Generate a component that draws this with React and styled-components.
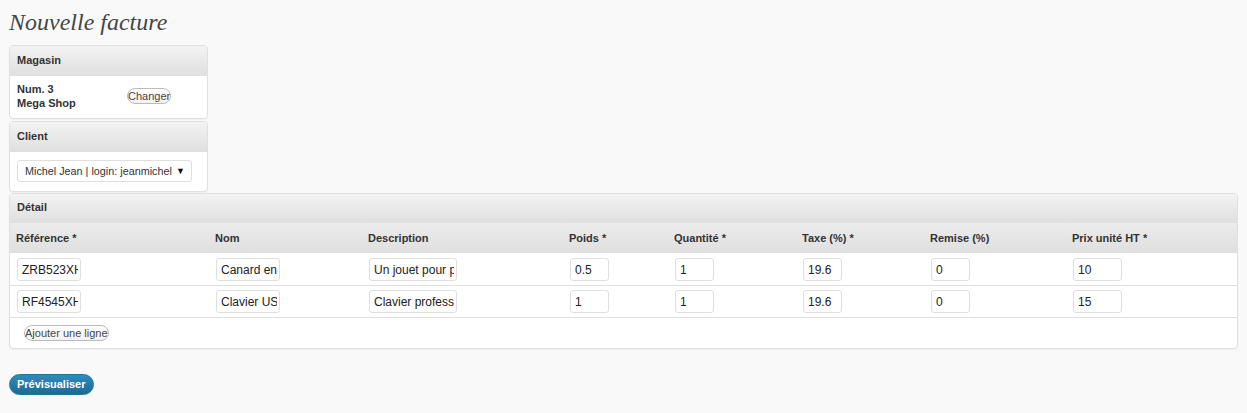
import React from 'react'
import styled, { createGlobalStyle } from 'styled-components'

const GlobalStyle = createGlobalStyle`
  body {
    margin: 0;
    background: #f9f9f9;
    font-family: "Liberation Sans", Arial, sans-serif;
    color: #333;
  }
`;

const columns = [
  { label: 'Référence *', width: 199, input: 64 },
  { label: 'Nom', width: 153, input: 64 },
  { label: 'Description', width: 201, input: 88 },
  { label: 'Poids *', width: 105, input: 39 },
  { label: 'Quantité *', width: 128, input: 39 },
  { label: 'Taxe (%) *', width: 128, input: 39 },
  { label: 'Remise (%)', width: 142, input: 39 },
  { label: 'Prix unité HT *', width: 172, input: 49 },
];

const lines = [
  ['ZRB523XH', 'Canard en plastique', 'Un jouet pour petits', '0.5', '1', '19.6', '0', '10'],
  ['RF4545XH', 'Clavier USB', 'Clavier professionnel', '1', '1', '19.6', '0', '15'],
];

export default function App() {
  return (
    <Page>
      <GlobalStyle />
      <Title>Nouvelle facture</Title>

      <Panel $width="199px">
        <PanelHead>Magasin</PanelHead>
        <ShopBody>
          <ShopName>
            Num. 3<br />
            Mega Shop
          </ShopName>
          <SmallButton>Changer</SmallButton>
        </ShopBody>
      </Panel>

      <Panel $width="199px">
        <PanelHead>Client</PanelHead>
        <ClientBody>
          <Select>
            <span>Michel Jean | login: jeanmichel</span>
            <Arrow>▼</Arrow>
          </Select>
        </ClientBody>
      </Panel>

      <Panel $tight>
        <PanelHead $height={29}>Détail</PanelHead>
        <Table>
          <colgroup>
            {columns.map((c) => (
              <col key={c.label} style={{ width: c.width }} />
            ))}
          </colgroup>
          <thead>
            <tr>
              {columns.map((c) => (
                <Th key={c.label}>{c.label}</Th>
              ))}
            </tr>
          </thead>
          <tbody>
            {lines.map((line, i) => (
              <tr key={i}>
                {line.map((v, j) => (
                  <Td key={j} $first={i === 0}>
                    <Field defaultValue={v} style={{ width: columns[j].input }} />
                  </Td>
                ))}
              </tr>
            ))}
            <tr>
              <FootCell colSpan={8}>
                <SmallButton>Ajouter une ligne</SmallButton>
              </FootCell>
            </tr>
          </tbody>
        </Table>
      </Panel>

      <PrimaryButton>Prévisualiser</PrimaryButton>
    </Page>
  )
}

const Page = styled.div`
  padding: 8px 9px 18px 9px;
  display: flex;
  flex-direction: column;
  align-items: flex-start;
  gap: 2px;
`;

const Title = styled.h2`
  margin: 0 0 6px 0;
  font-family: "Liberation Serif", Georgia, serif;
  font-style: italic;
  font-weight: normal;
  font-size: 24px;
  line-height: 29px;
  color: #464646;
`;

const Panel = styled.div`
  box-sizing: border-box;
  width: ${(p) => p.$width || '100%'};
  margin-top: ${(p) => (p.$tight ? '-1px' : '0')};
  border: 1px solid #dfdfdf;
  border-radius: 4px;
  background: #fff;
  overflow: hidden;
  box-shadow: 0 1px 1px rgba(0, 0, 0, 0.04);
`;

const PanelHead = styled.div`
  height: ${(p) => p.$height || 30}px;
  line-height: ${(p) => (p.$height || 30) - 2}px;
  padding: 0 7px;
  font-size: 11px;
  font-weight: bold;
  color: #333;
  background: linear-gradient(#f3f3f3, #dfdfdf);
`;

const ShopBody = styled.div`
  display: flex;
  align-items: center;
  padding: 6px 7px 8px 7px;
  gap: 44px;
`;

const ShopName = styled.div`
  font-size: 11px;
  font-weight: bold;
  line-height: 14px;
  color: #333;
  width: 66px;
`;

const SmallButton = styled.button`
  font-family: "Liberation Sans", Arial, sans-serif;
  font-size: 11px;
  line-height: 14px;
  color: #464646;
  background: linear-gradient(#fff, #f2f2f2);
  border: 1px solid #bbb;
  border-radius: 11px;
  padding: 0;
  cursor: pointer;
`;

const ClientBody = styled.div`
  padding: 8px 7px 9px 7px;
`;

const Select = styled.div`
  box-sizing: border-box;
  display: flex;
  align-items: center;
  justify-content: space-between;
  width: 175px;
  height: 22px;
  padding: 0 6px 0 7px;
  border: 1px solid #dfdfdf;
  border-radius: 3px;
  font-size: 10.8px;
  color: #333;
  background: #fff;
`;

const Arrow = styled.span`
  font-size: 9px;
  color: #111;
`;

const Table = styled.table`
  width: 100%;
  border-collapse: collapse;
  table-layout: fixed;
`;

const Th = styled.th`
  height: 30px;
  padding: 0 6px;
  text-align: left;
  font-size: 11px;
  font-weight: bold;
  color: #333;
  background: linear-gradient(#ececec, #dfdfdf);
`;

const Td = styled.td`
  height: 31px;
  padding: 0 6px;
  border-top: 1px solid ${(p) => (p.$first ? '#fff' : '#dfdfdf')};
`;

const Field = styled.input`
  box-sizing: border-box;
  height: 23px;
  margin: 0 1px;
  padding: 0 2px 0 4px;
  border: 1px solid #dfdfdf;
  border-radius: 3px;
  font-family: "Liberation Sans", Arial, sans-serif;
  font-size: 12px;
  color: #222;
  background: #fff;
  outline: none;
`;

const FootCell = styled.td`
  height: 30px;
  padding: 5px 14px 0 14px;
  vertical-align: top;
  box-sizing: border-box;
  border-top: 1px solid #dfdfdf;
`;

const PrimaryButton = styled.button`
  margin-top: 23px;
  height: 21px;
  padding: 0 7px;
  font-family: "Liberation Sans", Arial, sans-serif;
  font-size: 11px;
  font-weight: bold;
  color: #fff;
  background: linear-gradient(#2e8bbd, #1e6a94);
  border: 1px solid #21759b;
  border-radius: 11px;
  cursor: pointer;
`;
